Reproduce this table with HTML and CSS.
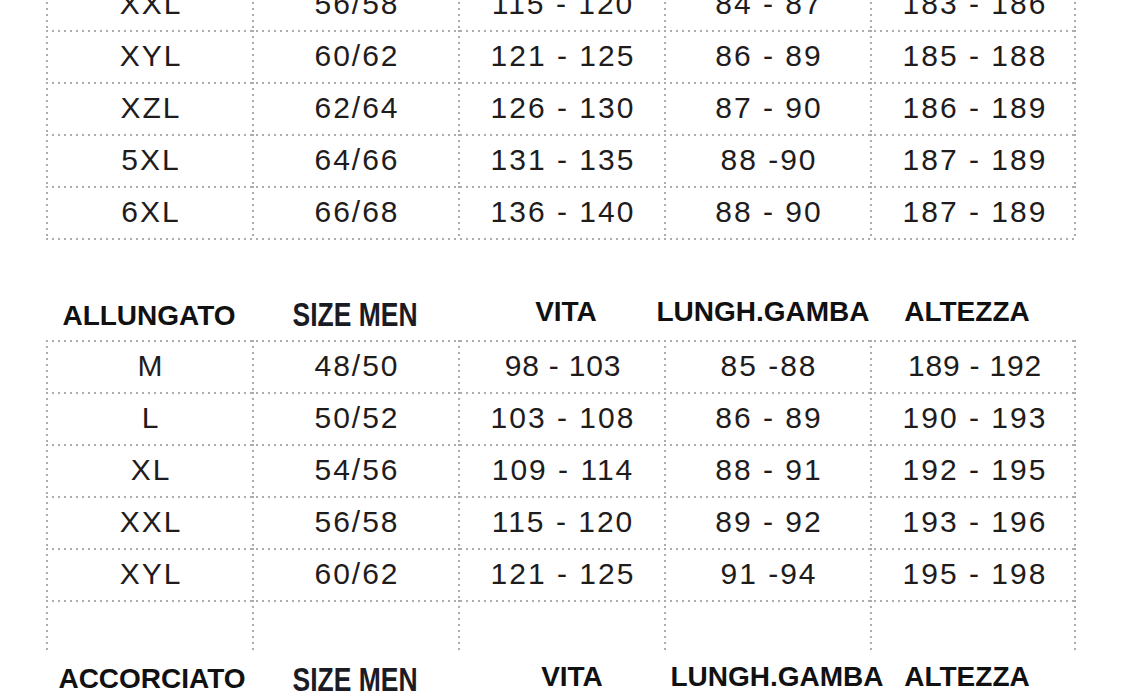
FILE: index.html
```html
<!DOCTYPE html>
<html lang="it">
<head>
<meta charset="utf-8">
<title>Tabella taglie</title>
<link rel="stylesheet" href="styles.css">
</head>
<body>
<main class="sheet">
  <section class="tbl tbl-closed tbl-first">
    <div class="row"><div class="cell">XXL</div><div class="cell">56/58</div><div class="cell">115 - 120</div><div class="cell">84 - 87</div><div class="cell">183 - 186</div></div>
    <div class="row"><div class="cell">XYL</div><div class="cell">60/62</div><div class="cell">121 - 125</div><div class="cell">86 - 89</div><div class="cell">185 - 188</div></div>
    <div class="row"><div class="cell">XZL</div><div class="cell">62/64</div><div class="cell">126 - 130</div><div class="cell">87 - 90</div><div class="cell">186 - 189</div></div>
    <div class="row"><div class="cell">5XL</div><div class="cell">64/66</div><div class="cell">131 - 135</div><div class="cell">88 -90</div><div class="cell">187 - 189</div></div>
    <div class="row"><div class="cell">6XL</div><div class="cell">66/68</div><div class="cell">136 - 140</div><div class="cell">88 - 90</div><div class="cell">187 - 189</div></div>
  </section>

  <header class="hdr hdr-long">
    <div class="hc hc-first">ALLUNGATO</div>
    <div class="hc hc-size"><span class="cond">SIZE MEN</span></div>
    <div class="hc hc-vita">VITA</div>
    <div class="hc hc-gamba">LUNGH.GAMBA</div>
    <div class="hc hc-alt">ALTEZZA</div>
  </header>

  <section class="tbl">
    <div class="row"><div class="cell">M</div><div class="cell">48/50</div><div class="cell tight">98 - 103</div><div class="cell">85 -88</div><div class="cell tight">189 - 192</div></div>
    <div class="row"><div class="cell">L</div><div class="cell">50/52</div><div class="cell">103 - 108</div><div class="cell">86 - 89</div><div class="cell">190 - 193</div></div>
    <div class="row"><div class="cell">XL</div><div class="cell">54/56</div><div class="cell">109 - 114</div><div class="cell">88 - 91</div><div class="cell">192 - 195</div></div>
    <div class="row"><div class="cell">XXL</div><div class="cell">56/58</div><div class="cell">115 - 120</div><div class="cell">89 - 92</div><div class="cell">193 - 196</div></div>
    <div class="row"><div class="cell">XYL</div><div class="cell">60/62</div><div class="cell">121 - 125</div><div class="cell">91 -94</div><div class="cell">195 - 198</div></div>
    <div class="row"><div class="cell"></div><div class="cell"></div><div class="cell"></div><div class="cell"></div><div class="cell"></div></div>
  </section>

  <header class="hdr hdr-short">
    <div class="hc hc-first hc-first-b">ACCORCIATO</div>
    <div class="hc hc-size"><span class="cond">SIZE MEN</span></div>
    <div class="hc hc-vita-b">VITA</div>
    <div class="hc hc-gamba-b">LUNGH.GAMBA</div>
    <div class="hc hc-alt">ALTEZZA</div>
  </header>
</main>
</body>
</html>
```

FILE: styles.css
```css
html, body {
  margin: 0;
  padding: 0;
  background: #ffffff;
  overflow: hidden;
}

body {
  width: 1140px;
  height: 700px;
  font-family: "Liberation Sans", Arial, Helvetica, sans-serif;
  color: #1f1c1d;
}

.sheet {
  padding-left: 46px;
}

.tbl {
  width: 1032px;
}

.tbl-first {
  margin-top: -22px;
}

.tbl-closed {
  padding-bottom: 2px;
  background: repeating-linear-gradient(90deg, #acacac 0 2px, transparent 2px 6px) left bottom / 1032px 2px no-repeat;
}

.row {
  display: grid;
  grid-template-columns: repeat(5, 206px);
  height: 52px;
  background: repeating-linear-gradient(90deg, #acacac 0 2px, transparent 2px 6px) left top / 1032px 2px no-repeat;
}

.cell {
  background: repeating-linear-gradient(180deg, #acacac 0 2px, transparent 2px 6px) left top / 2px 100% no-repeat;
  text-align: center;
  font-size: 30px;
  line-height: 52px;
  letter-spacing: 2px;
  padding-left: 4px;
  white-space: nowrap;
}

.cell:last-child {
  background:
    repeating-linear-gradient(180deg, #acacac 0 2px, transparent 2px 6px) left top / 2px 100% no-repeat,
    repeating-linear-gradient(180deg, #acacac 0 2px, transparent 2px 6px) right top / 2px 100% no-repeat;
}

.cell.tight {
  letter-spacing: 0.8px;
}

/* header rows */
.hdr {
  display: grid;
  grid-template-columns: repeat(5, 206px);
  align-items: start;
  color: #111111;
}

.hdr-long {
  height: 100px;
  padding-top: 58px;
  box-sizing: border-box;
}

.hdr-short {
  padding-top: 11px;
}

.hc {
  display: flex;
  justify-content: center;
  font-size: 28px;
  font-weight: bold;
  line-height: 28px;
  white-space: nowrap;
}

.hc-first {
  margin-top: 4px;
}

.hc-first-b {
  margin-top: 2px;
  padding-left: 6px;
}

.hc-size {
  margin-top: 3px;
}

.cond {
  display: inline-block;
  font-size: 33.5px;
  line-height: 28px;
  transform: scaleX(0.79);
  transform-origin: center;
  color: #1b1b24;
}

.hc-vita {
  padding-left: 10px;
}

.hc-vita-b {
  padding-left: 22px;
}

.hc-gamba {
  padding-right: 8px;
}

.hc-gamba-b {
  padding-left: 20px;
}

.hc-alt {
  padding-right: 12px;
}
```
